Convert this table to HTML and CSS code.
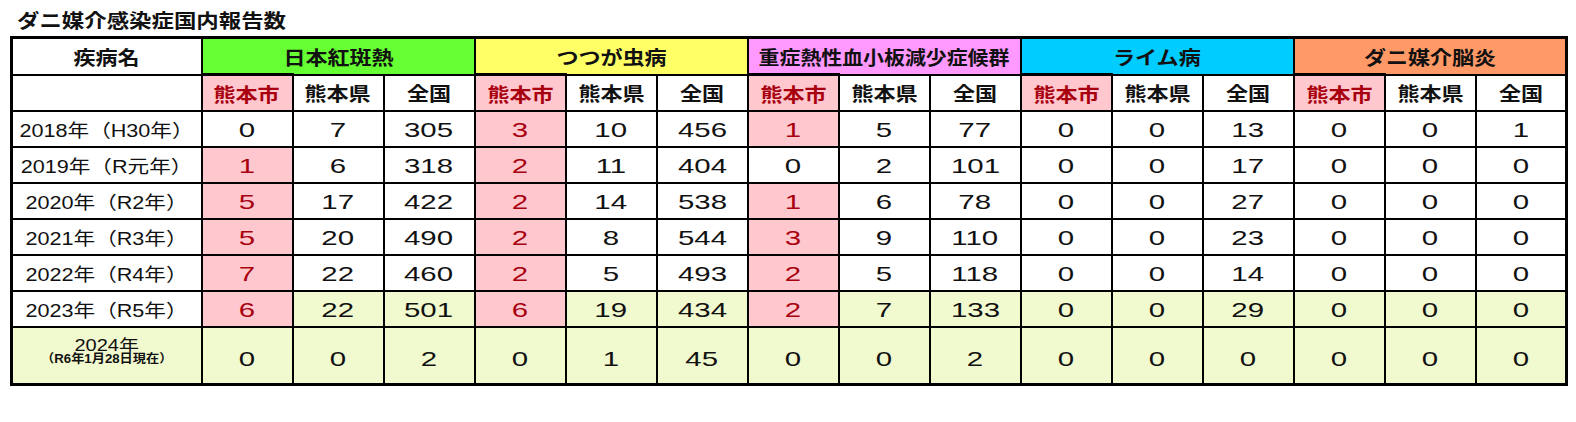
FILE: index.html
```html
<!DOCTYPE html>
<html lang="ja">
<head>
<meta charset="utf-8">
<title>ダニ媒介感染症国内報告数</title>
<link rel="stylesheet" href="styles.css">
</head>
<body>
<div class="title"><span class="tt">ダニ媒介感染症国内報告数</span></div>
<table class="grid">
  <colgroup>
    <col class="c-label">
    <col span="15" class="c-num">
  </colgroup>
  <thead>
    <tr class="r-group">
      <th class="lab"><span class="j">疾病名</span></th>
      <th colspan="3" class="g-green"><span class="j">日本紅斑熱</span></th>
      <th colspan="3" class="g-yellow"><span class="j">つつが虫病</span></th>
      <th colspan="3" class="g-pink"><span class="jn">重症熱性血小板減少症候群</span></th>
      <th colspan="3" class="g-cyan"><span class="j">ライム病</span></th>
      <th colspan="3" class="g-orange"><span class="j">ダニ媒介脳炎</span></th>
    </tr>
    <tr class="r-sub">
      <th class="lab"></th>
      <th class="city"><span class="j">熊本市</span></th><th><span class="j">熊本県</span></th><th><span class="j">全国</span></th>
      <th class="city"><span class="j">熊本市</span></th><th><span class="j">熊本県</span></th><th><span class="j">全国</span></th>
      <th class="city"><span class="j">熊本市</span></th><th><span class="j">熊本県</span></th><th><span class="j">全国</span></th>
      <th class="city"><span class="j">熊本市</span></th><th><span class="j">熊本県</span></th><th><span class="j">全国</span></th>
      <th class="city"><span class="j">熊本市</span></th><th><span class="j">熊本県</span></th><th><span class="j">全国</span></th>
    </tr>
  </thead>
  <tbody>
    <tr>
      <td class="lab"><span class="l">2018年（H30年）</span></td>
      <td class="cityd"><span class="n">0</span></td><td><span class="n">7</span></td><td><span class="n">305</span></td>
      <td class="cityd hit"><span class="n">3</span></td><td><span class="n">10</span></td><td><span class="n">456</span></td>
      <td class="cityd hit"><span class="n">1</span></td><td><span class="n">5</span></td><td><span class="n">77</span></td>
      <td class="cityd"><span class="n">0</span></td><td><span class="n">0</span></td><td><span class="n">13</span></td>
      <td class="cityd"><span class="n">0</span></td><td><span class="n">0</span></td><td><span class="n">1</span></td>
    </tr>
    <tr>
      <td class="lab"><span class="l">2019年（R元年）</span></td>
      <td class="cityd hit"><span class="n">1</span></td><td><span class="n">6</span></td><td><span class="n">318</span></td>
      <td class="cityd hit"><span class="n">2</span></td><td><span class="n">11</span></td><td><span class="n">404</span></td>
      <td class="cityd"><span class="n">0</span></td><td><span class="n">2</span></td><td><span class="n">101</span></td>
      <td class="cityd"><span class="n">0</span></td><td><span class="n">0</span></td><td><span class="n">17</span></td>
      <td class="cityd"><span class="n">0</span></td><td><span class="n">0</span></td><td><span class="n">0</span></td>
    </tr>
    <tr>
      <td class="lab"><span class="l">2020年（R2年）</span></td>
      <td class="cityd hit"><span class="n">5</span></td><td><span class="n">17</span></td><td><span class="n">422</span></td>
      <td class="cityd hit"><span class="n">2</span></td><td><span class="n">14</span></td><td><span class="n">538</span></td>
      <td class="cityd hit"><span class="n">1</span></td><td><span class="n">6</span></td><td><span class="n">78</span></td>
      <td class="cityd"><span class="n">0</span></td><td><span class="n">0</span></td><td><span class="n">27</span></td>
      <td class="cityd"><span class="n">0</span></td><td><span class="n">0</span></td><td><span class="n">0</span></td>
    </tr>
    <tr>
      <td class="lab"><span class="l">2021年（R3年）</span></td>
      <td class="cityd hit"><span class="n">5</span></td><td><span class="n">20</span></td><td><span class="n">490</span></td>
      <td class="cityd hit"><span class="n">2</span></td><td><span class="n">8</span></td><td><span class="n">544</span></td>
      <td class="cityd hit"><span class="n">3</span></td><td><span class="n">9</span></td><td><span class="n">110</span></td>
      <td class="cityd"><span class="n">0</span></td><td><span class="n">0</span></td><td><span class="n">23</span></td>
      <td class="cityd"><span class="n">0</span></td><td><span class="n">0</span></td><td><span class="n">0</span></td>
    </tr>
    <tr>
      <td class="lab"><span class="l">2022年（R4年）</span></td>
      <td class="cityd hit"><span class="n">7</span></td><td><span class="n">22</span></td><td><span class="n">460</span></td>
      <td class="cityd hit"><span class="n">2</span></td><td><span class="n">5</span></td><td><span class="n">493</span></td>
      <td class="cityd hit"><span class="n">2</span></td><td><span class="n">5</span></td><td><span class="n">118</span></td>
      <td class="cityd"><span class="n">0</span></td><td><span class="n">0</span></td><td><span class="n">14</span></td>
      <td class="cityd"><span class="n">0</span></td><td><span class="n">0</span></td><td><span class="n">0</span></td>
    </tr>
    <tr class="recent">
      <td class="lab"><span class="l">2023年（R5年）</span></td>
      <td class="cityd hit"><span class="n">6</span></td><td><span class="n">22</span></td><td><span class="n">501</span></td>
      <td class="cityd hit"><span class="n">6</span></td><td><span class="n">19</span></td><td><span class="n">434</span></td>
      <td class="cityd hit"><span class="n">2</span></td><td><span class="n">7</span></td><td><span class="n">133</span></td>
      <td class="cityd"><span class="n">0</span></td><td><span class="n">0</span></td><td><span class="n">29</span></td>
      <td class="cityd"><span class="n">0</span></td><td><span class="n">0</span></td><td><span class="n">0</span></td>
    </tr>
    <tr class="recent current">
      <td class="lab">
        <div class="lab2">
          <span class="l1">2024年</span>
          <span class="l2">（R6年1月28日現在）</span>
        </div>
      </td>
      <td class="cityd"><span class="n">0</span></td><td><span class="n">0</span></td><td><span class="n">2</span></td>
      <td class="cityd"><span class="n">0</span></td><td><span class="n">1</span></td><td><span class="n">45</span></td>
      <td class="cityd"><span class="n">0</span></td><td><span class="n">0</span></td><td><span class="n">2</span></td>
      <td class="cityd"><span class="n">0</span></td><td><span class="n">0</span></td><td><span class="n">0</span></td>
      <td class="cityd"><span class="n">0</span></td><td><span class="n">0</span></td><td><span class="n">0</span></td>
    </tr>
  </tbody>
</table>
</body>
</html>
```
FILE: styles.css
```css
html, body {
  margin: 0;
  padding: 0;
  background: #ffffff;
  color: #111111;
  font-family: "Noto Sans CJK JP", "Liberation Sans", sans-serif;
}

.title {
  height: 36px;
  padding-left: 17px;
  box-sizing: border-box;
  padding-top: 8px;
  font-size: 19px;
  line-height: 24px;
  font-weight: 600;
}
.tt {
  display: inline-block;
  transform-origin: left center;
  transform: scaleX(1.18);
  white-space: nowrap;
}

.grid {
  margin-left: 10px;
  border-collapse: collapse;
  table-layout: fixed;
  width: 1556px;
  border: 3px solid #000;
}
.c-label { width: 190px; }
.c-num { width: 91px; }

.grid th,
.grid td {
  border: 2px solid #000;
  padding: 0;
  text-align: center;
  vertical-align: middle;
  white-space: nowrap;
  overflow: visible;
}

.grid th {
  font-weight: 600;
  font-size: 19px;
  height: 34px;
}
.r-group th { background: #fff; border-bottom-width: 1px; }
.r-group th.lab { border-bottom-width: 2px; }
.r-sub th { background: #fff; }

.g-green { background: #66ff33 !important; }
.g-yellow { background: #ffff66 !important; }
.g-pink { background: #ff99ff !important; }
.g-cyan { background: #00ccff !important; }
.g-orange { background: #ff9966 !important; }

.r-sub th.city {
  background: #ffc7ce;
  color: #a8000e;
  border-top-width: 3px;
}

.j {
  display: inline-block;
  transform: scaleX(1.16);
}
.jn {
  display: inline-block;
  transform: scaleX(1.1);
}

.grid td {
  height: 34px;
  font-family: "Liberation Sans", "Noto Sans CJK JP", sans-serif;
  font-size: 21px;
  background: #fff;
}
.n {
  display: inline-block;
  transform: scaleX(1.4);
  position: relative;
  top: 1px;
}
.l {
  display: inline-block;
  font-size: 18px;
  transform: scaleX(1.2);
}

.recent td { background: #f1f9cf; }
.recent td.lab { background: #fff; }
.current td.lab { background: #f1f9cf; }

.grid td.hit {
  background: #ffc7ce;
  color: #a8000e;
}

.current td { height: 55px; }
.current .n { top: 3px; }
.lab2 {
  margin-bottom: 7px;
  line-height: 1;
}
.l1 {
  display: block;
  font-size: 16px;
  transform: scaleX(1.25);
  line-height: 15px;
}
.l2 {
  display: block;
  font-size: 12px;
  font-weight: 700;
  transform: scaleX(1.1);
  line-height: 13px;
}
```
